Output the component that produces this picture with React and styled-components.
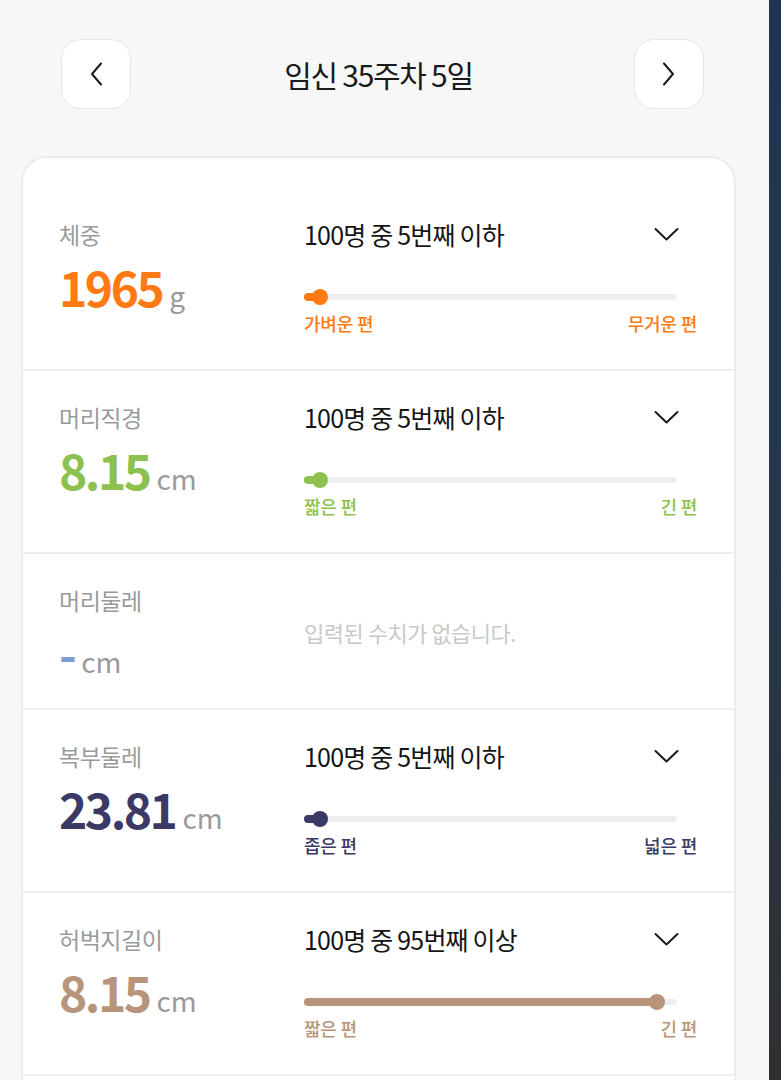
import React from 'react';
import styled, { createGlobalStyle } from "styled-components";

const GlobalStyle = createGlobalStyle`
html, body {
  margin: 0;
  padding: 0;
  height: 100%;
  overflow: hidden;
}
body {
  font-family: "Noto Sans CJK KR", "Noto Sans", sans-serif;
  background: #f7f7f7;
}
`;

const Page = styled.div`
display: flex;
height: 100vh;
overflow: hidden;
`;

const Main = styled.div`
width: 769px;
flex-shrink: 0;
background: #f7f7f7;
`;

const Strip = styled.div`
flex: 1;
background: linear-gradient(180deg, #1f3551 0%, #27384c 50%, #2f2f30 100%);
`;

const Header = styled.header`
display: flex;
align-items: center;
justify-content: space-between;
padding: 39px 65px 0 61px;
`;

const NavButton = styled.button`
width: 70px;
height: 70px;
border-radius: 20px;
border: 1px solid #e6e6e6;
background: #fff;
display: flex;
align-items: center;
justify-content: center;
padding: 0;
color: #222;
`;

const Title = styled.h1`
margin: 0 8px 0 0;
font-size: 30px;
font-weight: 400;
letter-spacing: -1.3px;
color: #1a1a1a;
`;

const Card = styled.div`
margin: 47px 33px 0 21px;
background: #fff;
border: 2px solid #ececec;
border-radius: 26px;
padding: 30px 0 120px;
`;

const Row = styled.div`
display: flex;
padding: 30px 37px 0 36px;
border-bottom: 2px solid #efefef;
min-height: ${(props) => props.short ? "124px" : "151px"};
box-sizing: content-box;
`;

const Left = styled.div`
width: 245px;
flex-shrink: 0;
`;

const Label = styled.div`
font-size: 23px;
line-height: 32px;
color: #9a9a9a;
letter-spacing: -0.5px;
`;

const Value = styled.div`
margin-top: 7px;
line-height: 58px;
display: flex;
align-items: baseline;
`;

const Number = styled.span`
font-size: 48px;
font-weight: 700;
letter-spacing: -2.5px;
color: ${(props) => props.color};
`;

const Unit = styled.span`
font-size: 28px;
color: #9a9a9a;
margin-left: 7px;
`;

const Right = styled.div`
flex: 1;
`;

const RankRow = styled.div`
display: flex;
align-items: center;
justify-content: space-between;
height: 32px;
padding-right: 18px;
`;

const Rank = styled.span`
font-size: 25px;
letter-spacing: -0.8px;
color: #151515;
`;

const Empty = styled.div`
font-size: 22px;
color: #c9c9c9;
letter-spacing: -0.5px;
line-height: 32px;
margin-top: 32px;
`;

const Track = styled.div`
position: relative;
height: 16px;
margin: 39px 20px 0 0;
&::before {
  content: "";
  position: absolute;
  left: 0;
  right: 0;
  top: 5px;
  height: 6px;
  border-radius: 3px;
  background: #eeeeee;
}
`;

const Fill = styled.div`
position: absolute;
left: 0;
top: 4px;
height: 8px;
border-radius: 4px;
background: ${(props) => props.color};
`;

const Knob = styled.div`
position: absolute;
top: 0;
width: 16px;
height: 16px;
margin-left: -8px;
border-radius: 50%;
background: ${(props) => props.color};
`;

const Ends = styled.div`
display: flex;
justify-content: space-between;
margin-top: 7px;
font-size: 18px;
font-weight: 500;
line-height: 22px;
letter-spacing: -0.2px;
color: ${(props) => props.color};
`;

const Chevron = ({ dir }) => {
  if (dir === "down")
    return (
      <svg width="25" height="15" viewBox="0 0 25 15" fill="none">
        <polyline points="1.5,2 12.5,12.5 23.5,2" stroke="#1a1a1a" strokeWidth="2" strokeLinecap="round" strokeLinejoin="round" />
      </svg>
    );
  const pts = dir === "left" ? "11,1.5 2,12 11,22.5" : "2,1.5 11,12 2,22.5";
  return (
    <svg width="13" height="24" viewBox="0 0 13 24" fill="none">
      <polyline points={pts} stroke="#1a1a1a" strokeWidth="2" strokeLinecap="round" strokeLinejoin="round" />
    </svg>
  );
};

const items = [
  { label: "체중", value: "1965", unit: "g", color: "#ff7a12", rank: "100명 중 5번째 이하", pct: 4.4, low: "가벼운 편", high: "무거운 편" },
  { label: "머리직경", value: "8.15", unit: "cm", color: "#8cc14f", rank: "100명 중 5번째 이하", pct: 4.4, low: "짧은 편", high: "긴 편" },
  { label: "머리둘레", value: "-", unit: "cm", color: "#7d9fd0", empty: true },
  { label: "복부둘레", value: "23.81", unit: "cm", color: "#3b3a66", rank: "100명 중 5번째 이하", pct: 4.4, low: "좁은 편", high: "넓은 편" },
  { label: "허벅지길이", value: "8.15", unit: "cm", color: "#b8957a", rank: "100명 중 95번째 이상", pct: 94.6, low: "짧은 편", high: "긴 편" },
];

function App() {
  return (
    <>
      <GlobalStyle />
      <Page>
        <Main>
          <Header>
            <NavButton><Chevron dir="left" /></NavButton>
            <Title>임신 35주차 5일</Title>
            <NavButton><Chevron dir="right" /></NavButton>
          </Header>
          <Card>
            {items.map((it, idx) =>
              <Row key={idx} short={it.empty}>
                <Left>
                  <Label>{it.label}</Label>
                  <Value>
                    <Number color={it.color}>{it.value}</Number>
                    <Unit>{it.unit}</Unit>
                  </Value>
                </Left>
                <Right>
                  {it.empty ? <Empty>입력된 수치가 없습니다.</Empty> : <>
                    <RankRow>
                      <Rank>{it.rank}</Rank>
                      <Chevron dir="down" />
                    </RankRow>
                    <Track>
                      <Fill color={it.color} style={{ width: it.pct + "%" }} />
                      <Knob color={it.color} style={{ left: it.pct + "%" }} />
                    </Track>
                    <Ends color={it.color}>
                      <span>{it.low}</span>
                      <span>{it.high}</span>
                    </Ends>
                  </>}
                </Right>
              </Row>
            )}
          </Card>
        </Main>
        <Strip />
      </Page>
    </>
  );
}

export default App;
